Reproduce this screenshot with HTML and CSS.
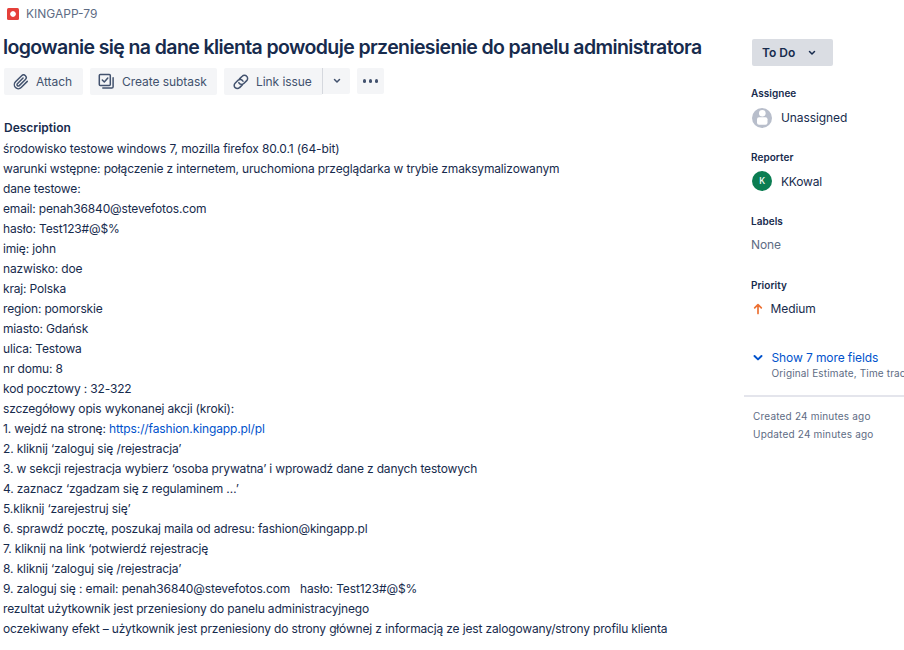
FILE: index.html
```html
<!DOCTYPE html>
<html lang="pl">
<head>
<meta charset="utf-8">
<title>KINGAPP-79</title>
<link rel="stylesheet" href="styles.css">
</head>
<body>
<div class="issue">
  <main class="main">
    <div class="crumb"><span class="bug"></span><span>KINGAPP-79</span></div>
    <h1 class="title">logowanie się na dane klienta powoduje przeniesienie do panelu administratora</h1>
    <div class="toolbar">
      <button class="btn attach"><svg width="16" height="16" viewBox="0 0 24 24"><path d="M21.440 11.050l-9.190 9.190a6 6 0 0 1-8.490-8.490l9.190-9.190a4 4 0 0 1 5.660 5.660l-9.200 9.190a2 2 0 0 1-2.830-2.830l8.490-8.480"/></svg><span>Attach</span></button>
      <button class="btn subtask"><svg width="18" height="18" viewBox="0 0 18 18"><rect x="1.300" y="1.500" width="11" height="11" rx="1"/><path d="m4.300 7 2 2 3.500-4M15.100 4.700v9a1.300 1.300 0 0 1-1.300 1.300H4.800"/></svg><span>Create subtask</span></button>
      <div class="split">
        <button class="btn link"><svg width="18" height="18" viewBox="0 0 18 18"><path d="M7.500 5.900l2.700-2.700a3.100 3.100 0 0 1 4.500 0 3.100 3.100 0 0 1 0 4.400l-2.900 2.900a3.100 3.100 0 0 1-5-.9M10.300 11.900l-2.700 2.700a3.100 3.100 0 0 1-4.500 0 3.100 3.100 0 0 1 0-4.400l2.900-2.900a3.100 3.100 0 0 1 5 .9"/></svg><span>Link issue</span></button>
        <button class="btn drop"><svg width="8" height="6" viewBox="0 0 8 6"><path d="m1.500 1.500 2.500 2.500 2.500-2.500"/></svg></button>
      </div>
      <button class="btn more"><i></i><i></i><i></i></button>
    </div>
    <h2 class="heading">Description</h2>
    <div class="description">
      <p class="loose">środowisko testowe windows 7, mozilla firefox 80.0.1 (64-bit)</p>
      <p>warunki wstępne: połączenie z internetem, uruchomiona przeglądarka w trybie zmaksymalizowanym</p>
      <p>dane testowe:</p>
      <p>email: penah36840@stevefotos.com</p>
      <p>hasło: Test123#@$%</p>
      <p>imię: john</p>
      <p>nazwisko: doe</p>
      <p>kraj: Polska</p>
      <p>region: pomorskie</p>
      <p>miasto: Gdańsk</p>
      <p>ulica: Testowa</p>
      <p>nr domu: 8</p>
      <p>kod pocztowy : 32-322</p>
      <p>szczegółowy opis wykonanej akcji (kroki):</p>
      <p class="loose">1. wejdź na stronę: <a>https://fashion.kingapp.pl/pl</a></p>
      <p class="loose">2. kliknij ‘zaloguj się /rejestracja’</p>
      <p>3. w sekcji rejestracja wybierz ‘osoba prywatna’ i wprowadź dane z danych testowych</p>
      <p>4. zaznacz ‘zgadzam się z regulaminem …’</p>
      <p class="loose">5.kliknij ‘zarejestruj się’</p>
      <p>6. sprawdź pocztę, poszukaj maila od adresu: fashion@kingapp.pl</p>
      <p class="loose">7. kliknij na link ‘potwierdź rejestrację</p>
      <p class="loose">8. kliknij ‘zaloguj się /rejestracja’</p>
      <p class="loose">9. zaloguj się : email: penah36840@stevefotos.com &nbsp; hasło: Test123#@$%</p>
      <p>rezultat użytkownik jest przeniesiony do panelu administracyjnego</p>
      <p>oczekiwany efekt – użytkownik jest przeniesiony do strony głównej z informacją ze jest zalogowany/strony profilu klienta</p>
    </div>
  </main>
  <aside class="side">
    <button class="status"><span>To Do</span><svg width="8" height="6" viewBox="0 0 8 6"><path d="m1.500 1.500 2.500 2.500 2.500-2.500"/></svg></button>
    <section class="field"><h3>Assignee</h3><div class="value">
      <svg class="avatar" width="20" height="20" viewBox="0 0 20 20"><circle cx="10" cy="10" r="10" fill="#b8becb"/><circle cx="10.300" cy="5.300" r="3.300" fill="#fff"/><rect x="5" y="9.200" width="10.500" height="7.600" rx="2" fill="#fff"/></svg><span>Unassigned</span></div></section>
    <section class="field"><h3>Reporter</h3><div class="value"><span class="avatar initial">K</span><span class="name">KKowal</span></div></section>
    <section class="field"><h3>Labels</h3><div class="value none">None</div></section>
    <section class="field"><h3>Priority</h3><div class="value priority"><svg width="10" height="12" viewBox="0 0 10 12"><path d="M5 10.500V2M1.700 4.900 5 1.700l3.300 3.200"/></svg><span>Medium</span></div></section>
    <div class="expand"><svg width="10" height="8" viewBox="0 0 10 8"><path d="M1.500 2 5 5.400 8.500 2"/></svg><div><a>Show 7 more fields</a><small>Original Estimate, Time tracking</small></div></div>
    <div class="dates"><p>Created 24 minutes ago</p><p>Updated 24 minutes ago</p></div>
  </aside>
</div>
</body>
</html>
```
FILE: styles.css
```css
* { box-sizing: border-box; }
body { margin: 0; background: #fff; color: #172b4d; font: 12px/20px Inter, "Liberation Sans", sans-serif; overflow: hidden; }
h1, h2, h3, p { margin: 0; }
svg { display: block; flex: none; }
a { color: #0052cc; }
.issue { display: flex; width: 904px; height: 650px; overflow: hidden; }
.main { width: 744px; flex: none; padding: 4px 0 0 3px; }
.crumb { display: flex; align-items: center; gap: 7px; height: 20px; padding-left: 4px; color: #5e6c84; }
.bug { width: 12px; height: 12px; border-radius: 1.5px; background: radial-gradient(circle, #fff 2.4px, #e5403a 3.2px); }
.title { margin-top: 9px; font-size: 19.5px; line-height: 28px; font-weight: 600; letter-spacing: -.605px; white-space: nowrap; }
.toolbar { display: flex; gap: 7px; margin: 7px 0 0 1px; height: 27px; }
.btn { display: flex; align-items: center; margin: 0; border: 0; padding: 0 0 0 8px; height: 27px; gap: 6px; border-radius: 2px; background: #f4f5f7; color: #42526e; font: inherit; letter-spacing: -.06px; white-space: nowrap; }
.btn svg, .status svg { fill: none; stroke: currentColor; stroke-width: 1.5; stroke-linecap: round; stroke-linejoin: round; }
.attach { width: 79px; gap: 7px; padding-left: 9px; }
.attach svg { stroke-width: 2.2; }
.subtask { width: 127px; }
.split { display: flex; }
.link { width: 98px; border-radius: 2px 0 0 2px; }
.drop { width: 28px; height: 26px; padding: 0; justify-content: center; border-left: 1px solid #d5d8de; border-radius: 0 2px 2px 0; }
.more { width: 27px; height: 26px; padding: 0; justify-content: center; gap: 2.500px; }
.more i { width: 3.500px; height: 3.500px; border-radius: 50%; background: #42526e; }
.heading { margin: 23px 0 0 1px; font-size: 12px; line-height: 20px; font-weight: 600; }
.description { margin-top: 1px; letter-spacing: -.16px; white-space: nowrap; }
.loose { letter-spacing: -.12px; }
.side { width: 160px; flex: none; padding: 39px 0 0; }
.status { display: flex; align-items: center; gap: 13px; margin: 0 0 0 8px; width: 81px; height: 27px; padding: 0 0 0 10px; border: 0; border-radius: 2px; background: #dadde3; color: #172b4d; font: 600 12px/20px Inter, sans-serif; }
.field { height: 64px; padding-left: 7px; }
.status + .field { margin-top: 19px; }
h3 { font-size: 10px; line-height: 16px; font-weight: 600; letter-spacing: .04px; }
.value { display: flex; align-items: center; gap: 9px; height: 20px; margin-top: 7px; padding-left: 1px; letter-spacing: -.1px; }
.avatar { width: 20px; height: 20px; }
.initial { border-radius: 50%; background: #0b7d52; color: #fff; font-size: 8.5px; font-weight: 500; text-align: center; }
.name { padding-top: 2px; letter-spacing: -.2px; }
.field + .field .value { margin-top: 6px; }
.none { color: #5e6c84; padding-left: 0; }
.priority { gap: 8px; padding-left: 1.5px; }
.priority svg { fill: none; stroke: #ed7133; stroke-width: 1.700; stroke-linecap: round; stroke-linejoin: round; }
.expand { display: flex; gap: 9px; height: 48px; margin-top: 6px; padding: 1px 0 0 8.5px; white-space: nowrap; }
.expand svg { margin-top: 6px; fill: none; stroke: #0052cc; stroke-width: 2; stroke-linecap: round; stroke-linejoin: round; }
.expand a, .expand small { display: block; }
.expand a { letter-spacing: -.1px; }
.expand small { margin-top: -1px; font-size: 10px; line-height: 12px; letter-spacing: .15px; color: #5e6c84; }
.dates { border-top: 2px solid #e4e5ec; padding: 10px 0 0 9px; font-size: 10px; line-height: 18px; letter-spacing: .19px; color: #5e6c84; }
```
